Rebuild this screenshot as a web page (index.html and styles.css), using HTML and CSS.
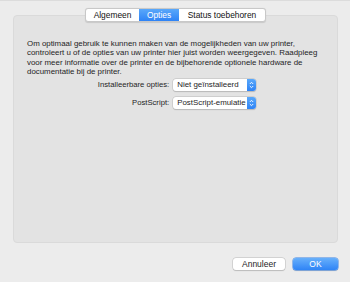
FILE: index.html
```html
<!DOCTYPE html>
<html>
<head>
<meta charset="utf-8">
<link rel="stylesheet" href="styles.css">
</head>
<body>
<div class="window">
  <div class="tabs">
    <div class="tab tab-general">Algemeen</div>
    <div class="tab tab-options active">Opties</div>
    <div class="tab tab-status">Status toebehoren</div>
  </div>
  <div class="panel">
    <p class="intro">Om optimaal gebruik te kunnen maken van de mogelijkheden van uw printer,<br>controleert u of de opties van uw printer hier juist worden weergegeven. Raadpleeg<br>voor meer informatie over de printer en de bijbehorende optionele hardware de<br>documentatie bij de printer.</p>
    <div class="form">
      <div class="label">Installeerbare opties:</div>
      <div class="popup"><span class="val">Niet geïnstalleerd</span><span class="step"><svg width="5" height="8" viewBox="0 0 5 8"><path d="M0.8 3 L2.5 1.3 L4.2 3 M0.8 5 L2.5 6.7 L4.2 5" fill="none" stroke="#fff" stroke-width="0.9"/></svg></span></div>
      <div class="label">PostScript:</div>
      <div class="popup"><span class="val">PostScript-emulatie</span><span class="step"><svg width="5" height="8" viewBox="0 0 5 8"><path d="M0.8 3 L2.5 1.3 L4.2 3 M0.8 5 L2.5 6.7 L4.2 5" fill="none" stroke="#fff" stroke-width="0.9"/></svg></span></div>
    </div>
  </div>
  <div class="buttons">
    <div class="btn">Annuleer</div>
    <div class="btn primary">OK</div>
  </div>
</div>
</body>
</html>
```
FILE: styles.css
```css
html, body {
  margin: 0;
  padding: 0;
}
body {
  width: 350px;
  height: 282px;
  background: #ececec;
  font-family: "Liberation Sans", Arial, sans-serif;
  font-size: 7.9px;
  color: #1e1e1e;
  overflow: hidden;
}
.window {
  border-top: 1px solid #dcdcdc;
  padding: 7px 12px 0 13px;
  display: flex;
  flex-direction: column;
}
.tabs {
  display: flex;
  position: relative;
  z-index: 1;
  align-self: center;
  background: #fff;
  border: 1px solid #c8c8c8;
  border-radius: 3px;
  box-shadow: 0 0.5px 1px rgba(0,0,0,0.12);
  height: 12px;
  overflow: hidden;
  font-size: 8.4px;
}
.tab {
  line-height: 12px;
  color: #111;
  text-align: center;
  box-sizing: border-box;
}
.tab-general {
  width: 53px;
}
.tab-options {
  width: 40px;
}
.tab-status {
  width: 86px;
}
.tab.active {
  background: linear-gradient(#5aa8fa, #2e83f6);
  color: #fff;
}
.panel {
  margin-top: -7px;
  height: 228px;
  box-sizing: border-box;
  background: #e3e3e3;
  border: 1px solid #dadada;
  border-radius: 4px;
  padding: 23px 10px 0 13px;
}
.intro {
  margin: 0;
  line-height: 9.4px;
  white-space: nowrap;
}
.form {
  margin-top: 2px;
  display: grid;
  grid-template-columns: auto 83px;
  column-gap: 4px;
  row-gap: 6px;
  justify-content: center;
  align-items: center;
  font-size: 7.7px;
}
.label {
  text-align: right;
}
.popup {
  height: 12px;
  box-sizing: border-box;
  background: #fff;
  border-radius: 3px;
  box-shadow: 0 0 0 0.5px #bdbdbd, 0 0.5px 1px rgba(0,0,0,0.2);
  display: flex;
  align-items: center;
  overflow: hidden;
  font-size: 7.9px;
}
.val {
  flex: 1;
  padding-left: 4px;
  white-space: nowrap;
  line-height: 12px;
}
.step {
  width: 9px;
  height: 12px;
  background: linear-gradient(#5aa8fa, #2e83f6);
  display: flex;
  align-items: center;
  justify-content: center;
}
.buttons {
  display: flex;
  justify-content: flex-end;
  gap: 8px;
  margin-top: 15px;
  font-size: 8.5px;
}
.btn {
  height: 12px;
  line-height: 12px;
  text-align: center;
  background: #fff;
  border-radius: 3px;
  box-shadow: 0 0 0 0.5px #bdbdbd, 0 0.5px 1px rgba(0,0,0,0.2);
  width: 52px;
}
.btn.primary {
  width: 45px;
  background: linear-gradient(#68b0fb, #2f84f6);
  color: #fff;
  box-shadow: 0 0 0 0.5px #3c86ea, 0 0.5px 1px rgba(0,0,0,0.2);
}
```
